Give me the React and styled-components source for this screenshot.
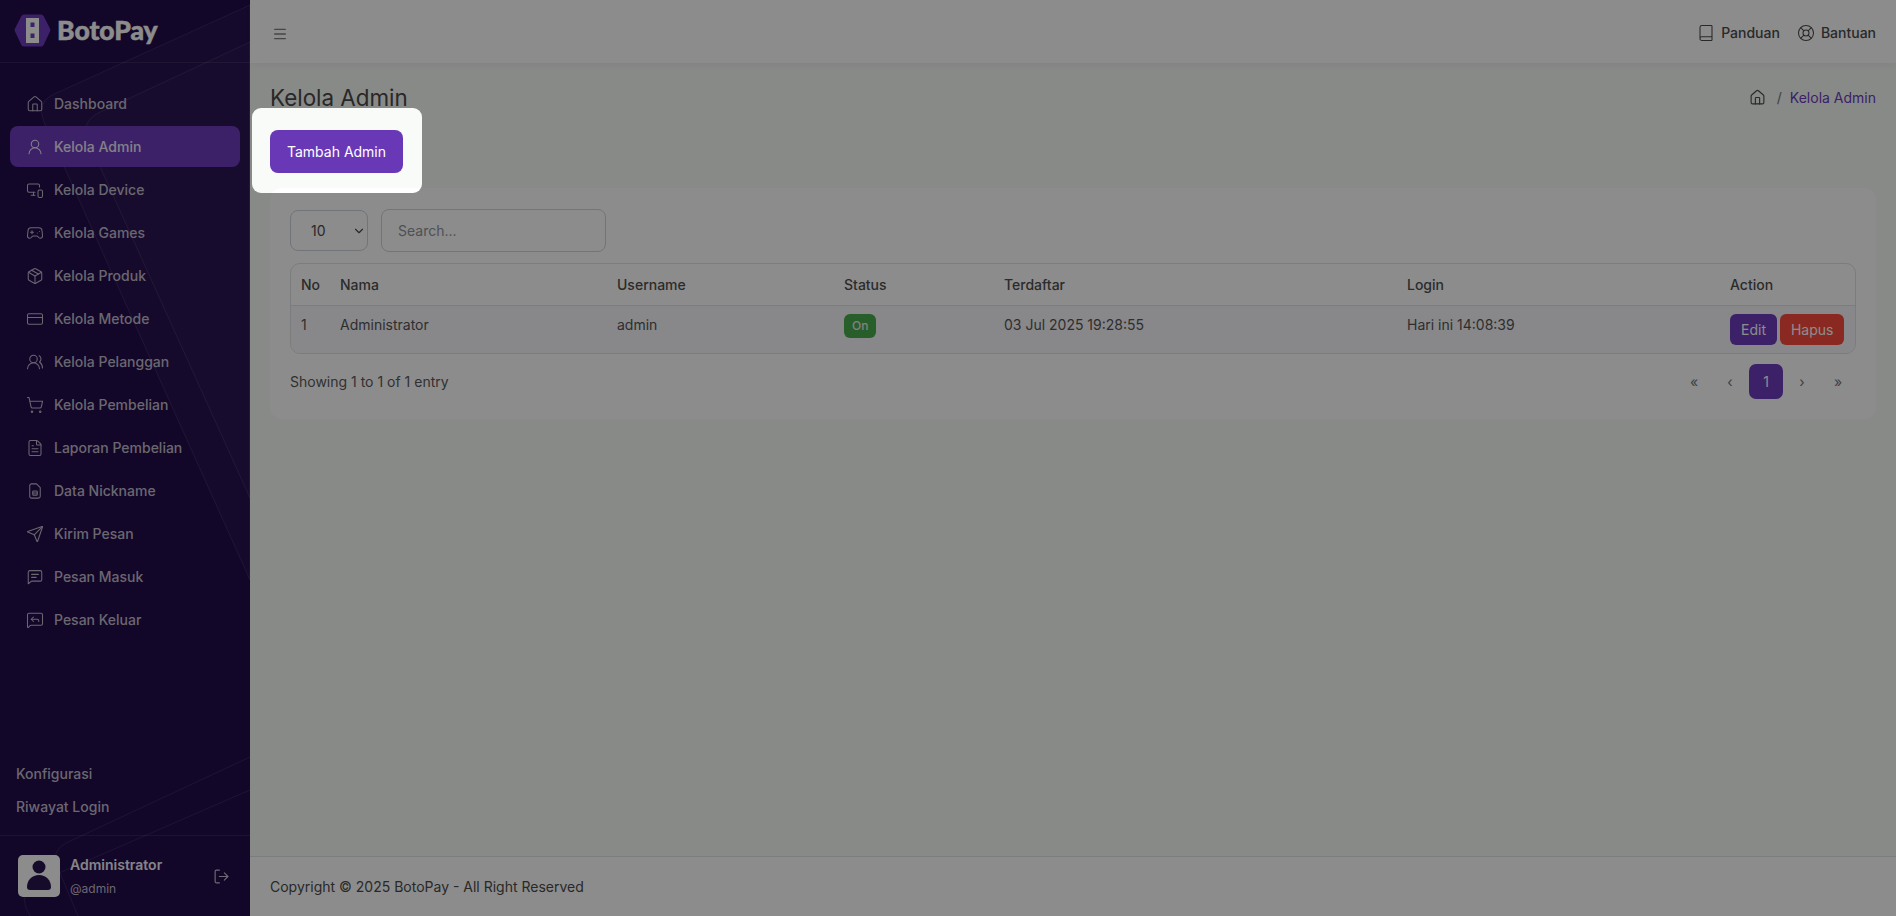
import React from 'react'
import styled, { createGlobalStyle } from 'styled-components'
import {
  House, UserRound, MonitorSmartphone, Gamepad2, Package, CreditCard, UsersRound,
  ShoppingCart, FileText, Send, MessageSquareReply, LogOut,
  Book, LifeBuoy, Menu, ChevronDown
} from 'lucide-react'

const GlobalStyle = createGlobalStyle`
  * { box-sizing: border-box; }
  html, body { margin: 0; padding: 0; height: 100%; }
  body {
    font-family: Inter, "Liberation Sans", sans-serif;
    font-size: 14px;
    color: #495057;
    background: #f8f9fc;
    overflow: hidden;
  }
`

const FileBadge = ({ size, strokeWidth }) => (
  <svg width={size} height={size} viewBox="0 0 24 24" fill="none" stroke="currentColor" strokeWidth={strokeWidth} strokeLinecap="round" strokeLinejoin="round">
    <path d="M7 2.500h7l5 5V19a2.500 2.500 0 0 1-2.500 2.500h-9A2.500 2.500 0 0 1 5 19V5a2.500 2.500 0 0 1 2.500-2.500Z" />
    <rect x="9" y="12" width="6" height="5.500" rx="1" />
    <path d="M9 14.700h6" />
  </svg>
)

const MessageLines = ({ size, strokeWidth }) => (
  <svg width={size} height={size} viewBox="0 0 24 24" fill="none" stroke="currentColor" strokeWidth={strokeWidth} strokeLinecap="round" strokeLinejoin="round">
    <path d="M5 3.500h14A2 2 0 0 1 21 5.500v10a2 2 0 0 1-2 2H7.500L3 21V5.500a2 2 0 0 1 2-2Z" />
    <path d="M7.500 8.500h9" />
    <path d="M7.500 12.500h6" />
  </svg>
)

const menu = [
  { label: 'Dashboard', icon: House },
  { label: 'Kelola Admin', icon: UserRound, active: true },
  { label: 'Kelola Device', icon: MonitorSmartphone },
  { label: 'Kelola Games', icon: Gamepad2 },
  { label: 'Kelola Produk', icon: Package },
  { label: 'Kelola Metode', icon: CreditCard },
  { label: 'Kelola Pelanggan', icon: UsersRound },
  { label: 'Kelola Pembelian', icon: ShoppingCart },
  { label: 'Laporan Pembelian', icon: FileText },
  { label: 'Data Nickname', icon: FileBadge },
  { label: 'Kirim Pesan', icon: Send },
  { label: 'Pesan Masuk', icon: MessageLines },
  { label: 'Pesan Keluar', icon: MessageSquareReply }
]

const App = () => (
  <>
    <GlobalStyle />
    <Layout>
      <Sidebar>
        <Decoration viewBox="0 0 250 916" fill="none">
          <path d="M250 5 L52 95 Q36 103 44 122 L250 580 Z" fill="#ffffff" fillOpacity="0.03" stroke="#ffffff" strokeOpacity="0.1" />
          <path d="M250 42 L100 112 Q80 122 88 140 L250 498 Z" fill="#ffffff" fillOpacity="0.02" stroke="#ffffff" strokeOpacity="0.1" />
          <path d="M250 757 L66 843 Q50 851 58 868 L78 916" stroke="#ffffff" strokeOpacity="0.1" />
          <path d="M250 790 L36 883 Q20 892 26 908 L30 916" stroke="#ffffff" strokeOpacity="0.1" />
        </Decoration>
        <Brand>
          <svg width="37" height="33" viewBox="0 0 37 33">
            <path d="M10 0.500h17a3 3 0 0 1 2.600 1.500l6.400 12.500a3 3 0 0 1 0 3L29.600 31a3 3 0 0 1-2.600 1.500H10A3 3 0 0 1 7.400 31L1 17.500a3 3 0 0 1 0-3L7.400 2A3 3 0 0 1 10 .5Z" fill="#6d3cbd" />
            <path fillRule="evenodd" d="M12 4h13v25H12Z M16.500 8.500v4.500h4V8.500Z M16.500 19.500v4.500h4v-4.500Z" fill="#fff" />
          </svg>
          <BrandName>BotoPay</BrandName>
        </Brand>
        <Nav>
          {menu.map(({ label, icon: Icon, active }) => (
            <NavItem key={label} $active={active}>
              <Icon size={18} strokeWidth={1.4} />
              <span>{label}</span>
            </NavItem>
          ))}
        </Nav>
        <SideLinks>
          <SideLink>Konfigurasi</SideLink>
          <SideLink>Riwayat Login</SideLink>
        </SideLinks>
        <Profile>
          <Avatar>
            <svg width="26" height="30" viewBox="0 0 26 30" fill="#2a1550">
              <circle cx="13" cy="7" r="6.500" />
              <path d="M1 27c0-7 5-12 12-12s12 5 12 12c0 2-1 3-3 3H4c-2 0-3-1-3-3Z" />
            </svg>
          </Avatar>
          <ProfileText>
            <ProfileName>Administrator</ProfileName>
            <ProfileUser>@admin</ProfileUser>
          </ProfileText>
          <LogOut size={17} strokeWidth={1.6} />
        </Profile>
      </Sidebar>

      <Main>
        <TopBar>
          <MenuToggle size={16} strokeWidth={2} />
          <TopLinks>
            <TopLink><Book size={18} strokeWidth={1.4} />Panduan</TopLink>
            <TopLink><LifeBuoy size={18} strokeWidth={1.4} />Bantuan</TopLink>
          </TopLinks>
        </TopBar>

        <Content>
          <TitleRow>
            <Title>Kelola Admin</Title>
            <Crumbs>
              <House size={17} strokeWidth={1.6} />
              <CrumbSlash>/</CrumbSlash>
              <CrumbActive>Kelola Admin</CrumbActive>
            </Crumbs>
          </TitleRow>
          <AddButton>Tambah Admin</AddButton>

          <Card>
            <Filters>
              <PageSize>10<ChevronDown size={14} strokeWidth={2} /></PageSize>
              <Search placeholder="Search..." />
            </Filters>
            <TableWrap>
              <Table>
                <thead>
                  <tr>
                    <Th $w={39}>No</Th>
                    <Th $w={277}>Nama</Th>
                    <Th $w={227}>Username</Th>
                    <Th $w={160}>Status</Th>
                    <Th $w={403}>Terdaftar</Th>
                    <Th $w={323}>Login</Th>
                    <Th>Action</Th>
                  </tr>
                </thead>
                <tbody>
                  <tr>
                    <Td>1</Td>
                    <Td>Administrator</Td>
                    <Td>admin</Td>
                    <Td><Badge>On</Badge></Td>
                    <Td>03 Jul 2025 19:28:55</Td>
                    <Td>Hari ini 14:08:39</Td>
                    <Td>
                      <Actions>
                        <ActionButton $color="#6d3cbd">Edit</ActionButton>
                        <ActionButton $color="#fb4a3f">Hapus</ActionButton>
                      </Actions>
                    </Td>
                  </tr>
                </tbody>
              </Table>
            </TableWrap>
            <TableFooter>
              <span>Showing 1 to 1 of 1 entry</span>
              <Pagination>
                <PageLink>«</PageLink>
                <PageLink>‹</PageLink>
                <PageLink $active>1</PageLink>
                <PageLink>›</PageLink>
                <PageLink>»</PageLink>
              </Pagination>
            </TableFooter>
          </Card>
        </Content>

        <Footer>Copyright © 2025 BotoPay - All Right Reserved</Footer>
      </Main>
    </Layout>
    <TourCutout />
  </>
)

const Layout = styled.div`
  display: flex;
  height: 916px;
`

const Sidebar = styled.aside`
  position: relative;
  width: 250px;
  flex-shrink: 0;
  display: flex;
  flex-direction: column;
  background: #220c4c;
  color: #c9c3d2;
  overflow: hidden;
`

const Decoration = styled.svg`
  position: absolute;
  inset: 0;
  width: 250px;
  height: 916px;
  pointer-events: none;
`

const Brand = styled.div`
  position: relative;
  height: 63px;
  display: flex;
  align-items: center;
  gap: 6px;
  padding: 0 0 2px 14px;
  border-bottom: 1px solid rgba(255, 255, 255, 0.09);
`

const BrandName = styled.div`
  font-family: Lato, sans-serif;
  font-size: 26.5px;
  font-weight: 900;
  color: #fff;
  -webkit-text-stroke: 0.5px #fff;
`

const Nav = styled.nav`
  position: relative;
  display: flex;
  flex-direction: column;
  gap: 2px;
  padding: 20px 10px 0;
`

const NavItem = styled.a`
  height: 41px;
  display: flex;
  align-items: center;
  gap: 10px;
  padding-left: 16px;
  border-radius: 8px;
  font-weight: 500;
  background: ${(props) => (props.$active ? '#6d3cbd' : 'transparent')};
  color: ${(props) => (props.$active ? '#efeaf7' : '#c2bccb')};

  svg { flex-shrink: 0; }
`

const SideLinks = styled.div`
  position: relative;
  margin-top: auto;
  display: flex;
  flex-direction: column;
  gap: 13px;
  padding: 0 16px 18px;
`

const SideLink = styled.a`
  line-height: 20px;
  font-weight: 500;
  color: #c2bccb;
`

const Profile = styled.div`
  position: relative;
  height: 81px;
  display: flex;
  align-items: center;
  gap: 10px;
  padding: 0 20px 0 18px;
  border-top: 1px solid rgba(255, 255, 255, 0.09);
`

const Avatar = styled.div`
  width: 42px;
  height: 42px;
  border-radius: 5px;
  background: #fff;
  display: flex;
  align-items: flex-end;
  justify-content: center;
  padding-bottom: 7px;
`

const ProfileText = styled.div`
  flex: 1;
  display: flex;
  flex-direction: column;
  gap: 8px;
  margin-top: -1px;
`

const ProfileName = styled.div`
  font-size: 14px;
  line-height: 17px;
  font-weight: 600;
  color: #f3f0f8;
`

const ProfileUser = styled.div`
  font-size: 12px;
  line-height: 15px;
  color: #c2bccb;
`

const Main = styled.main`
  flex: 1;
  display: flex;
  flex-direction: column;
  min-width: 0;
`

const TopBar = styled.header`
  position: relative;
  height: 63px;
  flex-shrink: 0;
  display: flex;
  align-items: center;
  justify-content: space-between;
  padding: 2px 20px 0 22px;
  background: #fff;
  box-shadow: 0 1px 10px rgba(0, 0, 0, 0.07);
  color: #4b4b4b;
`

const MenuToggle = styled(Menu)`
  margin-top: 3px;
  color: #7f7f7f;
`

const TopLinks = styled.div`
  display: flex;
  gap: 17px;
`

const TopLink = styled.a`
  display: flex;
  align-items: center;
  gap: 6px;
  font-weight: 500;
  color: #4b4b4b;
`

const Content = styled.div`
  flex: 1;
  padding: 20px 20px 0;
  background: #f8fbf8;
`

const TitleRow = styled.div`
  height: 30px;
  display: flex;
  align-items: center;
  justify-content: space-between;
`

const Title = styled.h1`
  margin: -1px 0 0;
  font-size: 22.4px;
  line-height: 30px;
  font-weight: 400;
  color: #4a4a4a;
`

const Crumbs = styled.div`
  display: flex;
  align-items: center;
  gap: 8px;
  margin-top: -2px;
  color: #4b4b4b;
`

const CrumbSlash = styled.span`
  color: #6c757d;
  margin-left: 3px;
`

const CrumbActive = styled.span`
  color: #6d3cbd;
`

const AddButton = styled.button`
  display: block;
  margin-top: 17px;
  width: 133px;
  height: 43px;
  border: 0;
  border-radius: 8px;
  background: #6838b7;
  color: #fff;
  font: 400 14px Inter, sans-serif;
`

const Card = styled.section`
  margin-top: 15px;
  padding: 21px 20px 0;
  height: 231px;
  background: #fff;
  border-radius: 12px;
`

const Filters = styled.div`
  display: flex;
  align-items: center;
  gap: 13px;
`

const PageSize = styled.div`
  width: 78px;
  height: 41px;
  display: flex;
  align-items: center;
  justify-content: space-between;
  padding: 0 1px 0 20px;
  border: 1px solid #ced4da;
  border-radius: 8px;
  color: #4b4b4b;
`

const Search = styled.input`
  width: 225px;
  height: 43px;
  padding: 0 16px;
  border: 1px solid #ced4da;
  border-radius: 8px;
  background: transparent;
  font: 14px Inter, sans-serif;

  &::placeholder { color: #8f9399; }
`

const TableWrap = styled.div`
  margin-top: 11px;
  border: 1px solid #dee2e6;
  border-radius: 10px;
  overflow: hidden;
`

const Table = styled.table`
  width: 100%;
  border-collapse: collapse;
  table-layout: fixed;
`

const Th = styled.th`
  width: ${(props) => (props.$w ? `${props.$w}px` : 'auto')};
  height: 41px;
  padding: 0 10px;
  text-align: left;
  font-weight: 500;
  color: #4f4f4f;
  border-bottom: 1px solid #dee2e6;
`

const Td = styled.td`
  height: 48px;
  padding: 7px 10px 0;
  vertical-align: top;
  line-height: 24px;
  color: #555;
  background: #f7f7fb;
`

const Badge = styled.span`
  display: inline-block;
  height: 24px;
  margin-top: 1px;
  padding: 0 8px;
  border-radius: 6px;
  background: #47ab4e;
  color: #eaeaea;
  font-size: 12px;
  font-weight: 500;
  line-height: 24px;
`

const Actions = styled.div`
  display: flex;
  gap: 3px;
  margin-top: 1px;
`

const ActionButton = styled.button`
  height: 31px;
  padding: 0 11px;
  border: 0;
  border-radius: 6px;
  background: ${(props) => props.$color};
  color: #fff;
  font: 14px Inter, sans-serif;
`

const TableFooter = styled.div`
  margin-top: 10px;
  display: flex;
  align-items: center;
  justify-content: space-between;
  color: #5a5a5a;
`

const Pagination = styled.div`
  display: flex;
  gap: 2px;
  padding-right: 1px;
`

const PageLink = styled.a`
  width: 34px;
  height: 35px;
  display: flex;
  align-items: center;
  justify-content: center;
  border-radius: 7px;
  background: ${(props) => (props.$active ? '#6d3cbd' : 'transparent')};
  color: ${(props) => (props.$active ? '#fff' : '#6c757d')};
`

const Footer = styled.footer`
  height: 60px;
  flex-shrink: 0;
  display: flex;
  align-items: center;
  padding: 0 20px;
  background: #fff;
  border-top: 1px solid #dee2e6;
  color: #4b4b4b;
`

/* the dimmed page with the hole of the onboarding tour */
const TourCutout = styled.div`
  position: fixed;
  left: 252px;
  top: 108px;
  width: 170px;
  height: 85px;
  border-radius: 9px;
  box-shadow: 0 0 0 3000px rgba(0, 0, 0, 0.45);
`

export default App
